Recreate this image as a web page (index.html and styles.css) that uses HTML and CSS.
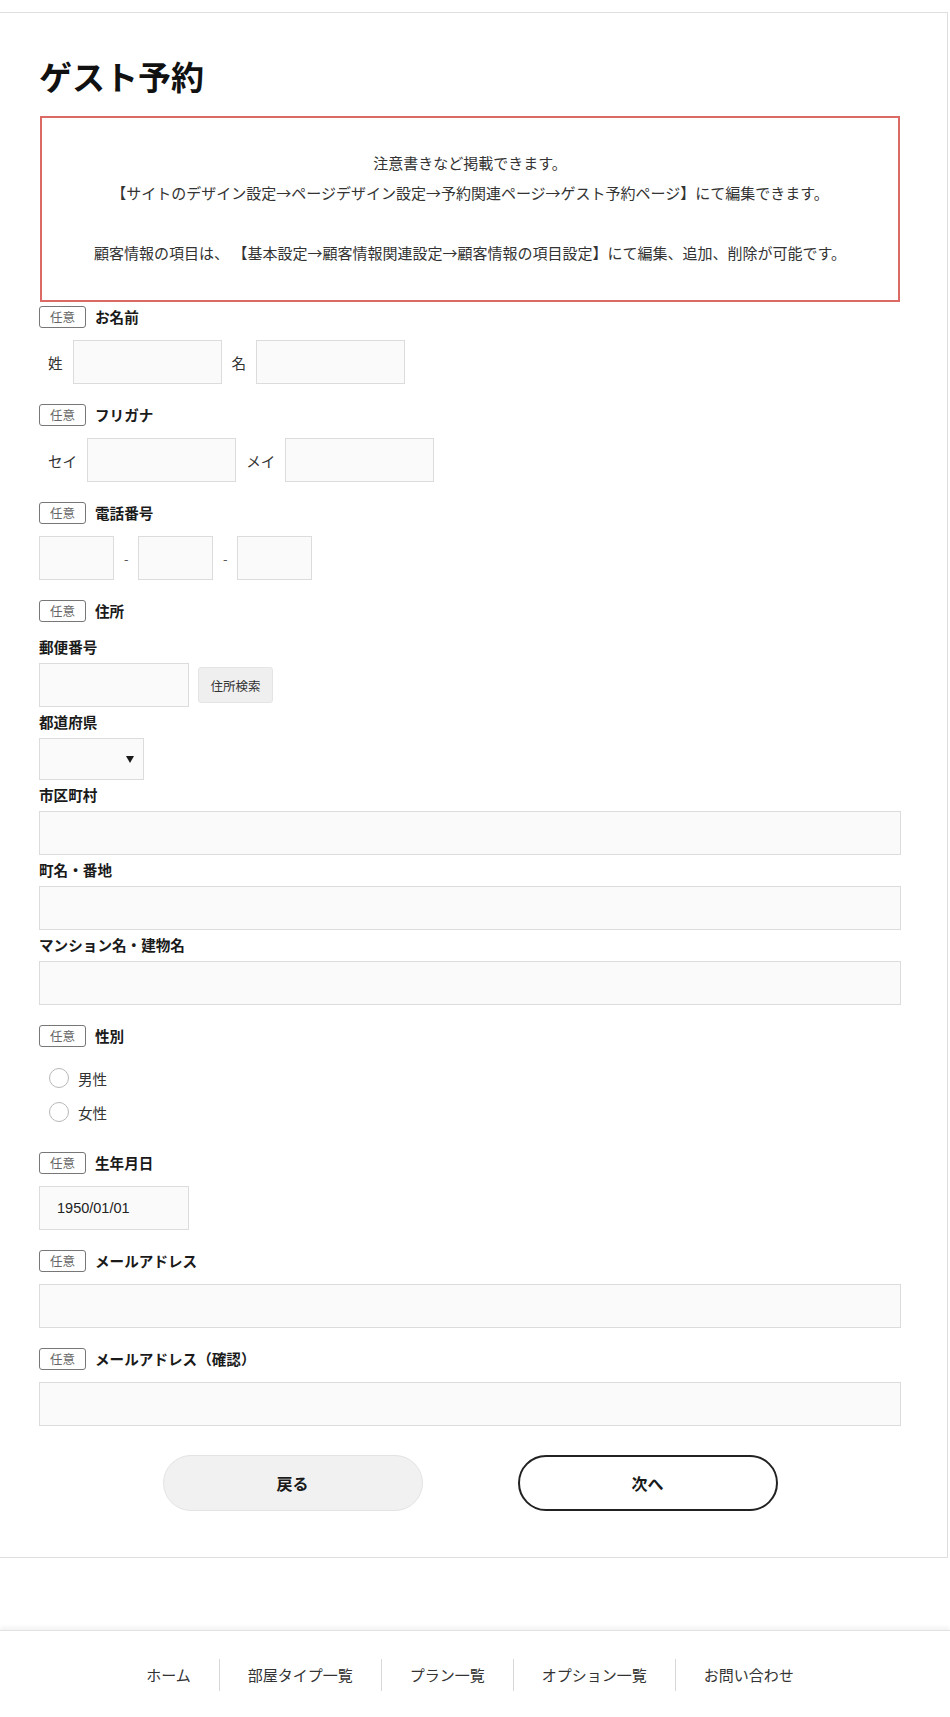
FILE: index.html
```html
<!DOCTYPE html>
<html lang="ja">
<head>
<meta charset="utf-8">
<title>ゲスト予約</title>
<link rel="stylesheet" href="styles.css">
</head>
<body>
<main class="page">
  <h1 class="title">ゲスト予約</h1>
  <div class="notice">
    <p>注意書きなど掲載できます。</p>
    <p>【サイトのデザイン設定→ページデザイン設定→予約関連ページ→ゲスト予約ページ】にて編集できます。</p>
    <p>&nbsp;</p>
    <p>顧客情報の項目は、 【基本設定→顧客情報関連設定→顧客情報の項目設定】にて編集、追加、削除が可能です。</p>
  </div>

  <form class="form">
    <div class="field first">
      <div class="head"><span class="badge">任意</span><span class="label">お名前</span></div>
      <div class="body row indent">
        <span class="mini">姓</span><input class="input half" type="text">
        <span class="mini">名</span><input class="input half" type="text">
      </div>
    </div>

    <div class="field">
      <div class="head"><span class="badge">任意</span><span class="label">フリガナ</span></div>
      <div class="body row indent">
        <span class="mini">セイ</span><input class="input half" type="text">
        <span class="mini">メイ</span><input class="input half" type="text">
      </div>
    </div>

    <div class="field">
      <div class="head"><span class="badge">任意</span><span class="label">電話番号</span></div>
      <div class="body row">
        <input class="input tel" type="text"><span class="dash">-</span>
        <input class="input tel" type="text"><span class="dash">-</span>
        <input class="input tel" type="text">
      </div>
    </div>

    <div class="field">
      <div class="head"><span class="badge">任意</span><span class="label">住所</span></div>
      <div class="body addr">
        <div class="sub-label">郵便番号</div>
        <div class="sub-input row zip-row">
          <input class="input zip" type="text">
          <button type="button" class="search-btn">住所検索</button>
        </div>
        <div class="sub-label">都道府県</div>
        <div class="sub-input">
          <div class="select-wrap">
            <select class="select"><option></option></select>
            <span class="caret"></span>
          </div>
        </div>
        <div class="sub-label">市区町村</div>
        <div class="sub-input"><input class="input wide" type="text"></div>
        <div class="sub-label">町名・番地</div>
        <div class="sub-input"><input class="input wide" type="text"></div>
        <div class="sub-label">マンション名・建物名</div>
        <div class="sub-input"><input class="input wide" type="text"></div>
      </div>
    </div>

    <div class="field">
      <div class="head"><span class="badge">任意</span><span class="label">性別</span></div>
      <div class="radios">
        <label class="radio"><input type="radio" name="sex"><span>男性</span></label>
        <label class="radio"><input type="radio" name="sex"><span>女性</span></label>
      </div>
    </div>

    <div class="field">
      <div class="head"><span class="badge">任意</span><span class="label">生年月日</span></div>
      <div class="body"><input class="input date" type="text" value="1950/01/01"></div>
    </div>

    <div class="field">
      <div class="head"><span class="badge">任意</span><span class="label">メールアドレス</span></div>
      <div class="body"><input class="input wide" type="text"></div>
    </div>

    <div class="field">
      <div class="head"><span class="badge">任意</span><span class="label">メールアドレス（確認）</span></div>
      <div class="body"><input class="input wide" type="text"></div>
    </div>

    <div class="actions">
      <button type="button" class="btn back">戻る</button>
      <button type="button" class="btn next">次へ</button>
    </div>
  </form>
</main>

<footer class="footer">
  <nav class="footer-nav">
    <a href="#">ホーム</a>
    <a href="#">部屋タイプ一覧</a>
    <a href="#">プラン一覧</a>
    <a href="#">オプション一覧</a>
    <a href="#">お問い合わせ</a>
  </nav>
</footer>
</body>
</html>
```

FILE: styles.css
```css
* { box-sizing: border-box; }

html, body {
  margin: 0;
  padding: 0;
  background: #fff;
}

body {
  font-family: "Noto Sans CJK JP", "Liberation Sans", sans-serif;
  color: #222;
  font-size: 14.6px;
}

.page {
  margin: 12px 2px 0 -1px;
  border: 1px solid #dedede;
  padding: 43px 46px 46px 39px;
}

.title {
  margin: 0 0 20px 0;
  font-size: 33px;
  line-height: 40px;
  font-weight: 700;
  color: #111;
}

.notice {
  margin: 0 1px;
  border: 2px solid #dc6a64;
  padding: 30px 10px 32px;
  text-align: center;
  color: #333;
  font-size: 15px;
  line-height: 30px;
}

.notice p {
  margin: 0;
}

.form {
  margin: 0;
}

.field {
  margin-top: 20px;
}

.field.first {
  margin-top: 4px;
}

.head {
  display: flex;
  align-items: center;
  gap: 9px;
  height: 22px;
}

.badge {
  width: 47px;
  height: 22px;
  border: 1px solid #777;
  border-radius: 3px;
  display: flex;
  align-items: center;
  justify-content: center;
  font-size: 12.5px;
  color: #666;
  line-height: 1;
}

.label {
  font-weight: 700;
  font-size: 14.6px;
  color: #1a1a1a;
  line-height: 22px;
}

.body {
  margin-top: 12px;
}

.row {
  display: flex;
  align-items: center;
  gap: 10px;
}

.indent {
  padding-left: 9px;
}

.mini {
  font-size: 14.6px;
  color: #333;
}

.input {
  height: 44px;
  border: 1px solid #dcdcdc;
  background: #fafafa;
  border-radius: 0;
  padding: 0 12px;
  font-family: "Liberation Sans", "Noto Sans CJK JP", sans-serif;
  font-size: 14.5px;
  color: #222;
  outline: none;
  margin: 0;
  display: block;
}

.half {
  width: 149px;
}

.tel {
  width: 75px;
}

.dash {
  font-size: 13px;
  color: #555;
  width: 4px;
  text-align: center;
}

.wide {
  width: 100%;
}

.addr {
  margin-top: 14px;
}

.sub-label {
  margin-top: 4px;
  font-weight: 700;
  font-size: 14.6px;
  line-height: 22px;
  color: #1a1a1a;
}

.sub-input {
  margin-top: 5px;
}

.zip-row {
  gap: 9px;
}

.zip {
  width: 150px;
}

.search-btn {
  width: 75px;
  height: 36px;
  background: #efefef;
  border: 1px solid #e4e4e4;
  border-radius: 3px;
  font-family: "Noto Sans CJK JP", sans-serif;
  font-size: 12.5px;
  color: #333;
  padding: 0;
}

.select-wrap {
  position: relative;
  width: 105px;
  height: 42px;
}

.select {
  appearance: none;
  -webkit-appearance: none;
  width: 105px;
  height: 42px;
  border: 1px solid #dcdcdc;
  background: #fafafa;
  border-radius: 0;
  margin: 0;
  display: block;
}

.caret {
  position: absolute;
  right: 10px;
  top: 18px;
  width: 0;
  height: 0;
  border-left: 4.5px solid transparent;
  border-right: 4.5px solid transparent;
  border-top: 7px solid #1a1a1a;
  pointer-events: none;
}

.radios {
  margin-top: 14px;
  padding-bottom: 3px;
}

.radio {
  display: flex;
  align-items: center;
  height: 34px;
  padding-left: 10px;
  gap: 9px;
  font-size: 14.6px;
  color: #333;
}

.radio input {
  appearance: none;
  -webkit-appearance: none;
  width: 20px;
  height: 20px;
  margin: 0;
  border: 1.5px solid #b8b8b8;
  border-radius: 50%;
  background: #fff;
}

.date {
  width: 150px;
  padding-left: 17px;
}

.actions {
  margin-top: 29px;
  display: flex;
  justify-content: center;
  gap: 95px;
}

.btn {
  width: 260px;
  height: 56px;
  border-radius: 28px;
  font-family: "Noto Sans CJK JP", sans-serif;
  font-size: 16px;
  font-weight: 700;
  color: #1a1a1a;
  padding: 0;
  margin: 0;
}

.btn.back {
  background: #f1f1f1;
  border: 1px solid #e3e3e3;
}

.btn.next {
  background: #fff;
  border: 2px solid #222;
}

.footer {
  margin-top: 72px;
  border-top: 1px solid #e2e2e2;
  box-shadow: 0 -3px 4px rgba(0, 0, 0, 0.05);
  padding: 28px 10px 25px 0;
  background: #fff;
}

.footer-nav {
  display: flex;
  justify-content: center;
}

.footer-nav a {
  display: block;
  height: 32px;
  line-height: 32px;
  padding: 0 28px;
  font-size: 15px;
  color: #333;
  text-decoration: none;
  border-left: 1px solid #d8d8d8;
}

.footer-nav a:first-child {
  border-left: none;
}
```
